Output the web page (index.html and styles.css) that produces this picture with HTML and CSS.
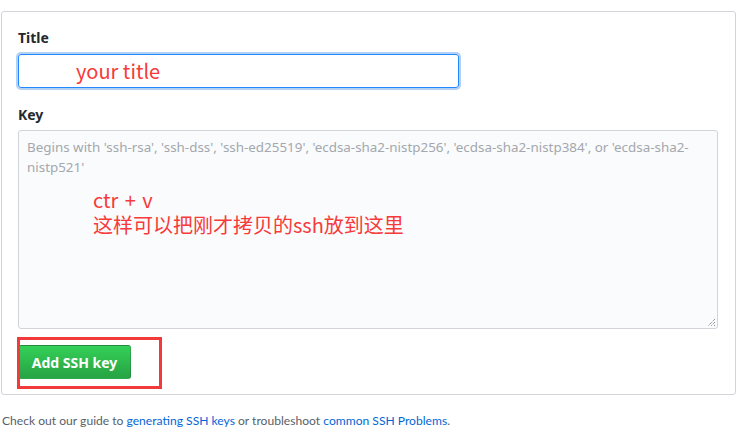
FILE: index.html
```html
<!DOCTYPE html>
<html lang="en">
<head>
<meta charset="utf-8">
<title>Add SSH key</title>
<link rel="stylesheet" href="styles.css">
</head>
<body>
  <form class="card">
    <div class="group">
      <label class="label">Title</label>
      <div class="input focused"><span class="note note-title">your title</span></div>
    </div>
    <div class="group group-key">
      <label class="label">Key</label>
      <div class="textarea">
        <p class="placeholder">Begins with 'ssh-rsa', 'ssh-dss', 'ssh-ed25519', 'ecdsa-sha2-nistp256', 'ecdsa-sha2-nistp384', or 'ecdsa-sha2-<br>nistp521'</p>
        <div class="note note-key">
          <div class="note-line">ctr + v</div>
          <div class="note-line">这样可以把刚才拷贝的ssh放到这里</div>
        </div>
        <svg class="grip" width="9" height="9" viewBox="0 0 9 9">
          <path d="M8 1 L1 8 M8 4 L4 8 M8 7 L7 8" stroke="#666" stroke-width="1" stroke-dasharray="1 1" fill="none"/>
        </svg>
      </div>
    </div>
    <div class="actions">
      <button type="button" class="btn">Add SSH key</button>
      <span class="highlight"></span>
    </div>
  </form>
  <p class="help">Check out our guide to <a href="#">generating SSH keys</a> or troubleshoot <a href="#">common SSH Problems</a>.</p>
</body>
</html>
```
FILE: styles.css
```css
* { box-sizing: border-box; }
body {
  margin: 0;
  background: #fff;
  font-family: "Noto Sans", "Open Sans", sans-serif;
  color: #24292e;
}
.card {
  width: 735px;
  margin: 11px 0 0 1px;
  border: 1px solid #d1d5da;
  border-radius: 3px;
  padding: 16px 16px 15px 16px;
}
.group { display: flex; flex-direction: column; }
.group-key { margin-top: 17px; }
.label {
  font-size: 14px;
  font-weight: 700;
  line-height: 20px;
  height: 20px;
  margin-bottom: 6px;
}
.group-key .label { margin-bottom: 5px; }
.input {
  width: 441px;
  height: 34px;
  border: 1px solid #2188ff;
  border-radius: 3px;
  box-shadow: 0 0 0 2px rgba(3, 102, 214, 0.3);
  padding-left: 57px;
  display: flex;
  align-items: center;
}
.note {
  color: #f73a3a;
  font-family: "Noto Sans CJK SC", "Noto Sans", sans-serif;
}
.note-title { font-size: 20px; line-height: 24px; margin-top: 0; }
.textarea {
  position: relative;
  width: 700px;
  height: 199px;
  background: #fafbfc;
  border: 1px solid #d1d5da;
  border-radius: 3px;
  padding: 6px 8px;
}
.placeholder {
  margin: 0;
  font-size: 13.4px;
  line-height: 20px;
  color: #a3a8ae;
}
.note-key {
  margin: 10px 0 0 66px;
  font-size: 20px;
}
.note-line { line-height: 25px; height: 25px; }
.note-line:first-child { word-spacing: 2px; }
.grip { position: absolute; right: 1px; bottom: 1px; }
.actions {
  position: relative;
  margin-top: 16px;
  display: flex;
}
.btn {
  width: 113px;
  height: 34px;
  padding: 0 12px;
  font-family: "Noto Sans", sans-serif;
  font-size: 14px;
  font-weight: 700;
  color: #fff;
  background: linear-gradient(180deg, #34d058 0%, #28a745 90%);
  border: 1px solid rgba(27, 31, 35, 0.2);
  border-radius: 3px;
}
.highlight {
  position: absolute;
  left: -1px;
  top: -8px;
  width: 145px;
  height: 52px;
  border: 3px solid #f33a3a;
}
.help {
  margin: 16px 0 0 2px;
  font-family: "Lato", "Noto Sans", sans-serif;
  font-size: 12.1px;
  line-height: 20px;
  color: #586069;
}
.help a { color: #0366d6; text-decoration: none; }
```
